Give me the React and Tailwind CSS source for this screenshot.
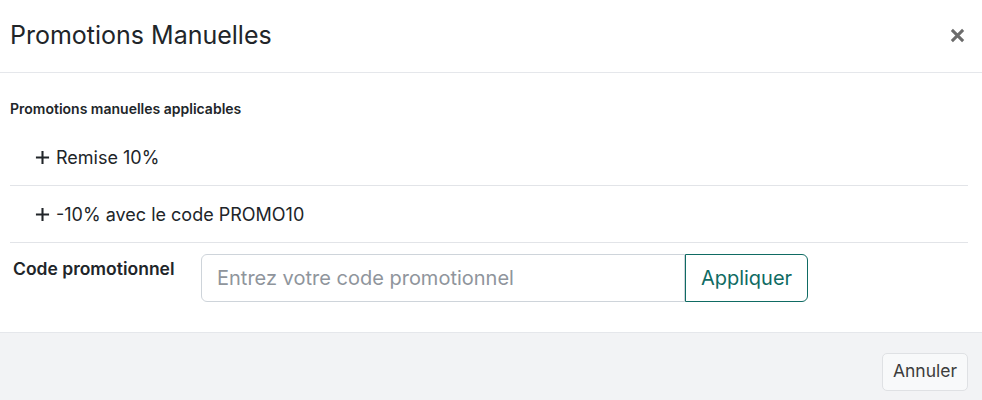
const promos = ["Remise 10%", "-10% avec le code PROMO10"];

const PlusIcon = () => (
  <svg width="15" height="15" viewBox="0 0 16 16" className="shrink-0">
    <path d="M8 1v14M1 8h14" stroke="#212529" strokeWidth="2.2" />
  </svg>
);

export default function App() {
  return (
    <div className="w-[982px] h-[400px] bg-white flex flex-col text-[#212529]" style={{ fontFamily: "Inter, 'Noto Sans', sans-serif" }}>
      <div className="h-[73px] shrink-0 flex items-center justify-between px-[10px] border-b border-[#e5e7eb]">
        <h2 className="text-[25px] leading-none pb-[1px]">Promotions Manuelles</h2>
        <button className="mr-[7px] mb-[1px] text-[#6b6b6b]">
          <svg width="15" height="15" viewBox="0 0 16 16">
            <path d="M2 2l12 12M14 2L2 14" stroke="currentColor" strokeWidth="3.2" />
          </svg>
        </button>
      </div>

      <div className="flex-1 px-[10px] pr-[14px] pt-[27px]">
        <p className="text-[14px] font-semibold leading-[18px]">Promotions manuelles applicables</p>
        <ul className="mt-[11px]">
          {promos.map((p) => (
            <li key={p} className="h-[57px] flex items-center gap-[6px] pl-[25px] border-b border-[#e2e4e8] text-[18px]">
              <PlusIcon />
              <span>{p}</span>
            </li>
          ))}
        </ul>
        <div className="flex items-start mt-[11px]">
          <label className="w-[191px] pl-[3px] pt-[2px] text-[17.5px] font-semibold">Code promotionnel</label>
          <div className="flex h-[48px]">
            <input
              className="w-[484px] h-full border border-[#ced4da] rounded-l-[6px] px-[15px] text-[20px] outline-none placeholder:text-[#8f959c]"
              placeholder="Entrez votre code promotionnel"
            />
            <button className="w-[123px] h-full border border-[#0f6b63] rounded-r-[6px] text-[20px] text-[#0f6b63]">Appliquer</button>
          </div>
        </div>
      </div>

      <div className="h-[68px] shrink-0 bg-[#f2f3f5] border-t border-[#e5e7eb] flex items-center justify-end pr-[14px]">
        <button className="w-[86px] h-[38px] border border-[#dfe1e4] rounded-[5px] bg-[#f8f9fa] text-[17.5px] text-[#3d3d3d] mt-[10px]">Annuler</button>
      </div>
    </div>
  );
}
